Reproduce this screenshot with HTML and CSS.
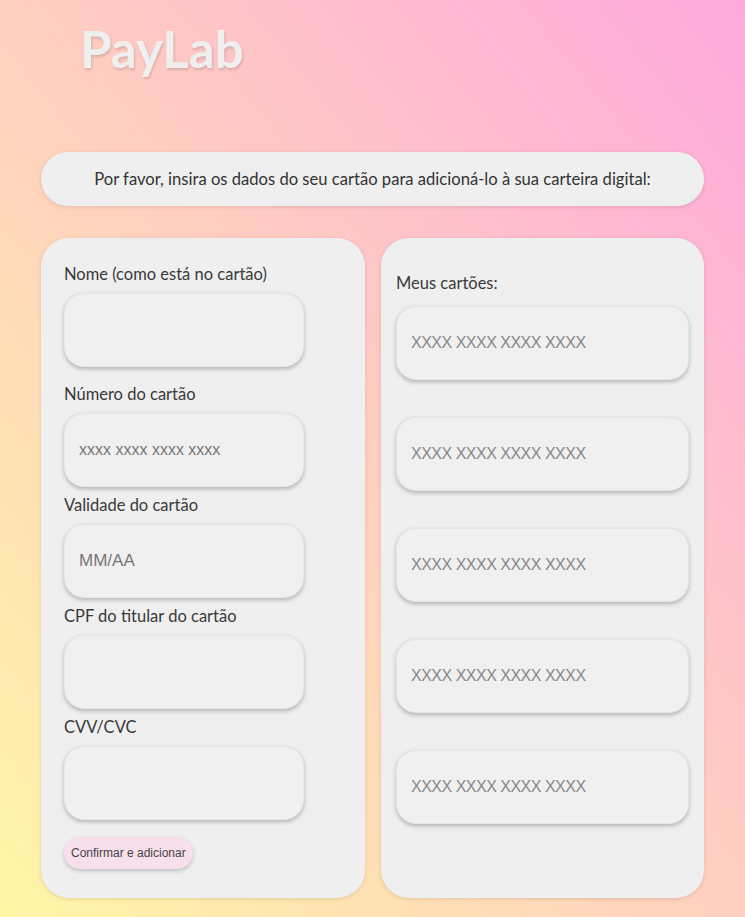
FILE: index.html
```html
<!DOCTYPE html>
<html lang="pt-BR">
<head>
<meta charset="utf-8">
<title>PayLab</title>
<link rel="stylesheet" href="styles.css">
</head>
<body>
<header class="header">
  <h1 class="logo">PayLab</h1>
</header>
<main class="main">
  <div class="banner">Por favor, insira os dados do seu cartão para adicioná-lo à sua carteira digital:</div>
  <div class="columns">
    <form class="panel form-panel">
      <label class="field-label">Nome (como está no cartão)</label>
      <input class="field field-first" type="text">
      <label class="field-label">Número do cartão</label>
      <input class="field field-small" type="text" placeholder="xxxx xxxx xxxx xxxx">
      <label class="field-label">Validade do cartão</label>
      <input class="field" type="text" placeholder="MM/AA">
      <label class="field-label">CPF do titular do cartão</label>
      <input class="field" type="text">
      <label class="field-label">CVV/CVC</label>
      <input class="field" type="text">
      <button class="submit" type="button">Confirmar e adicionar</button>
    </form>
    <section class="panel cards-panel">
      <h2 class="cards-title">Meus cartões:</h2>
      <div class="card">XXXX XXXX XXXX XXXX</div>
      <div class="card">XXXX XXXX XXXX XXXX</div>
      <div class="card">XXXX XXXX XXXX XXXX</div>
      <div class="card">XXXX XXXX XXXX XXXX</div>
      <div class="card">XXXX XXXX XXXX XXXX</div>
    </section>
  </div>
</main>
</body>
</html>
```
FILE: styles.css
```css
* { box-sizing: border-box; }

html, body {
  margin: 0;
  padding: 0;
  min-height: 917px;
}

body {
  background: linear-gradient(to top right, #fff6a6 0%, #ffcfc0 50%, #ffa8dd 100%);
  font-family: "Lato", "Liberation Sans", sans-serif;
  color: #3a3a3a;
}

.header {
  padding: 21px 0 0 80px;
}

.logo {
  margin: 0;
  font-size: 51px;
  line-height: 56px;
  font-weight: 700;
  color: #efefef;
  text-shadow: 1px 2px 3px rgba(0, 0, 0, 0.15);
}

.main {
  padding: 75px 41px 20px 41px;
}

.banner {
  height: 54px;
  display: flex;
  align-items: center;
  justify-content: center;
  background: #efefef;
  border-radius: 27px;
  box-shadow: 0 1px 4px rgba(0, 0, 0, 0.12);
  font-size: 16.6px;
  color: #333;
}

.columns {
  margin-top: 32px;
  display: grid;
  grid-template-columns: 324px 323px;
  gap: 16px;
}

.panel {
  background: #efefef;
  border-radius: 28px;
  box-shadow: 0 1px 4px rgba(0, 0, 0, 0.12);
}

.form-panel {
  display: flex;
  flex-direction: column;
  align-items: flex-start;
  padding: 27px 23px 29px 23px;
  margin: 0;
}

.field-label {
  display: block;
  font-size: 16.5px;
  line-height: 19px;
  color: #3a3a3a;
  margin-bottom: 9px;
}

.field {
  display: block;
  width: 240px;
  height: 74px;
  border: 1px solid #e6e6e6;
  border-radius: 20px;
  background: #f0f0f0;
  box-shadow: 0 2px 4px rgba(0, 0, 0, 0.25);
  padding: 0 14px;
  font-family: "Liberation Sans", Arial, sans-serif;
  font-size: 17px;
  color: #333;
  margin: 0 0 9px 0;
  outline: none;
}

.field-small { font-size: 16px; }

.field::placeholder { color: #777; }

.field-first { margin-bottom: 18px; }

.submit {
  margin-top: 8px;
  height: 32px;
  padding: 0 7px;
  border: none;
  border-radius: 16px;
  background: #f8dfec;
  color: #444;
  font-family: "Liberation Sans", Arial, sans-serif;
  font-size: 12px;
  box-shadow: 0 2px 4px rgba(0, 0, 0, 0.2);
}

.cards-panel {
  padding: 36px 15px 28px 15px;
  display: flex;
  flex-direction: column;
}

.cards-title {
  margin: 0 0 13px 0;
  font-size: 16.5px;
  line-height: 19px;
  font-weight: 400;
  color: #3a3a3a;
}

.card {
  height: 74px;
  margin-bottom: 37px;
  border: 1px solid #e6e6e6;
  border-radius: 20px;
  background: #f0f0f0;
  box-shadow: 0 2px 4px rgba(0, 0, 0, 0.25);
  display: flex;
  align-items: center;
  padding-left: 14px;
  font-family: "Liberation Sans", Arial, sans-serif;
  font-size: 16px;
  letter-spacing: -0.5px;
  color: #888;
}
```
